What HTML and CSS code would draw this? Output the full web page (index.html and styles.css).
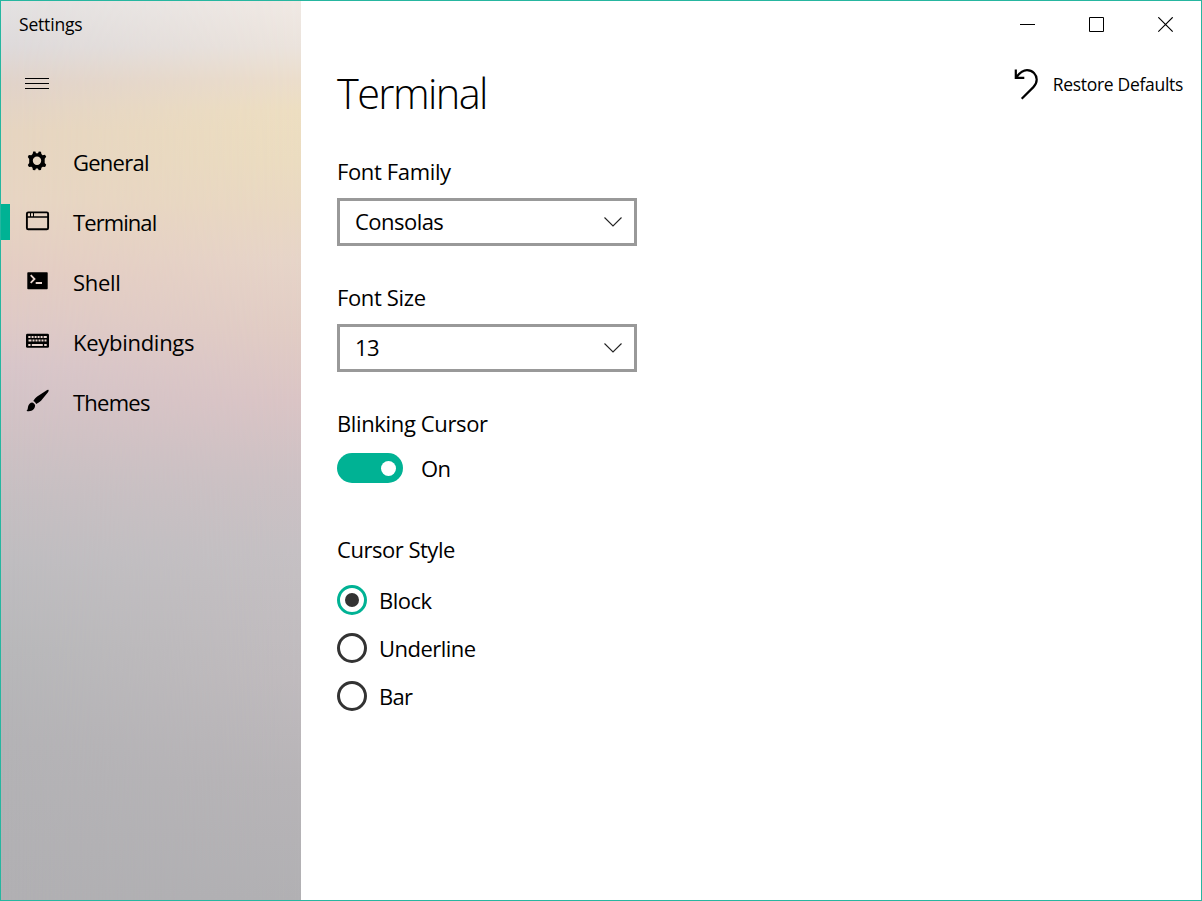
FILE: index.html
```html
<!DOCTYPE html>
<html lang="en">
<head>
<meta charset="utf-8">
<title>Settings</title>
<link rel="stylesheet" href="styles.css">
</head>
<body>
<div class="window">
  <aside class="sidebar">
    <div class="app-title">Settings</div>
    <button class="menu-button" aria-label="Menu"><i></i><i></i><i></i></button>
    <nav class="nav">
      <a class="nav-item">
        <svg class="icon" width="26" height="26" viewBox="0 0 26 26"><path fill-rule="evenodd" d="M9.2 3.4 11.4 3.6 12 5.3H14L14.8 3.5 17 3.8 17.4 6.1 18.6 7.2 21 6.8 22.2 8.8 20.7 10.8V15L22.2 16.8 21.1 18.9 18.7 18.7 17.4 19.7 17 22 14.8 22.2 13.8 20.5H12L11.1 22.2 8.9 22 8.5 19.7 7.4 18.7 5 19 3.8 17 5.2 15V10.9L3.8 9 4.8 7 7.3 7.2 8.6 6.1ZM13 8.6a4.2 4.2 0 1 0 0 8.4a4.2 4.2 0 1 0 0-8.4Z"/></svg>
        <span class="snug">General</span>
      </a>
      <a class="nav-item active">
        <svg class="icon" width="26" height="26" viewBox="0 0 26 26"><g fill="none" stroke="#000"><rect x="2.9" y="4.4" width="21.2" height="16.9" rx="1.3" stroke-width="1.9"/><path d="M3 9H24" stroke-width="1.5"/><path d="M6.5 5V9M9.5 5V9"/></g></svg>
        <span class="tight">Terminal</span>
      </a>
      <a class="nav-item">
        <svg class="icon" width="26" height="26" viewBox="0 0 26 26"><rect x="3.3" y="4.2" width="20.4" height="17" rx=".7"/><path class="cutout" d="M6.7 7.2 10.5 11 6.7 14.8M11.7 15H18" fill="none" stroke-width="1.8"/></svg>
        <span class="loose">Shell</span>
      </a>
      <a class="nav-item">
        <svg class="icon" width="26" height="26" viewBox="0 0 26 26"><rect x="2" y="5.8" width="23" height="14" rx="1.4"/><g class="cutout" fill="none" stroke-width="2"><path d="M4.3 8.9H22.8" stroke-dasharray="2.2 1.1 2 1 2 1 2 1 2 1 3.2 10"/><path d="M4.5 12.6H22.5" stroke-dasharray="3 1 2 1 2 1 2 1 2 1 2 10"/><path d="M4.3 16.9H6.5M7.8 16.9H18.8M20.2 16.9H22.7"/></g></svg>
        <span class="loose">Keybindings</span>
      </a>
      <a class="nav-item">
        <svg class="icon" width="26" height="26" viewBox="0 0 26 26"><path d="M24.5 2.1C25 2.8 24.4 3.7 23.8 4.6L17 12.7C15.6 14.1 14 15 12.2 15.9C11.6 14.5 10.6 13.5 9.3 12.9C10.4 11.3 11.5 10.1 13.2 8.6L22 2.7C23 2.1 24.2 1.5 24.5 2.1Z"/><path d="M8.3 14.4C9.8 14.8 10.9 16.1 11.1 17.6C11.1 20.3 9.5 22 7.4 22.8C5.6 23.4 3.5 23.4 2.5 22.7C4 22.3 3.6 20.4 4.1 18.6C4.6 16.2 6.2 14.4 8.3 14.4Z"/></svg>
        <span class="snug">Themes</span>
      </a>
    </nav>
  </aside>
  <main class="main">
    <div class="caption-bar">
      <svg width="16" height="16" viewBox="0 0 16 16"><path d="M0 7.5H15"/></svg>
      <svg width="16" height="16" viewBox="0 0 16 16"><path d="M.5.5H14.5V14.5H.5Z"/></svg>
      <svg width="16" height="16" viewBox="0 0 16 16"><path d="M.3.3 14.7 14.7M14.7.3.3 14.7" stroke-width="1.2"/></svg>
    </div>
    <header class="header">
      <h1>Terminal</h1>
      <button class="restore">
        <svg width="26" height="32" viewBox="0 0 26 32"><path d="M1.8 1.5V9.9H10.3M2 9.7C5.2 5.2 8.4 2.1 13 2.1C18.7 2.1 22.7 6.5 22.7 11.6C22.7 14.7 21.4 17.1 19.4 19.1L7.7 30.7"/></svg>
        <span>Restore Defaults</span>
      </button>
    </header>
    <form class="form">
      <section class="field">
        <div class="label">Font Family</div>
        <div class="select"><span>Consolas</span><svg width="18" height="10" viewBox="0 0 18 10"><path d="M.5.5 9 9 17.5.5"/></svg></div>
      </section>
      <section class="field">
        <div class="label">Font Size</div>
        <div class="select"><span class="digits">13</span><svg width="18" height="10" viewBox="0 0 18 10"><path d="M.5.5 9 9 17.5.5"/></svg></div>
      </section>
      <section class="field">
        <div class="label">Blinking Cursor</div>
        <div class="switch-row"><span class="switch"></span><span>On</span></div>
      </section>
      <section class="field">
        <div class="label cursor-style">Cursor Style</div>
        <div class="radios">
          <div class="option"><span class="radio checked"></span><span>Block</span></div>
          <div class="option"><span class="radio"></span><span>Underline</span></div>
          <div class="option"><span class="radio"></span><span class="snug">Bar</span></div>
        </div>
      </section>
    </form>
  </main>
</div>
</body>
</html>
```
FILE: styles.css
```css
* { box-sizing: border-box; }
body { margin: 0; font-family: "Open Sans", "Noto Sans", sans-serif; font-size: 22px; letter-spacing: -0.53px; color: #000; }
button { border: 0; padding: 0; background: none; font: inherit; letter-spacing: inherit; color: inherit; }
svg { display: block; flex: none; }
.window { display: flex; width: 1202px; height: 901px; border: 1px solid #26b6a0; background: #fff; }
.snug { letter-spacing: -0.75px; }
.tight { letter-spacing: -0.92px; }
.loose { letter-spacing: -0.28px; }

.sidebar {
  position: relative; isolation: isolate; width: 300px; flex: none;
  background: linear-gradient(#e4e2e2 0, #dedadb 45px, #e1d3ca 82px, #e6d5c1 130px, #e7d5c3 200px, #e4cdc3 270px, #dfcac7 320px, #d8c6ca 365px, #d0c2c5 430px, #c6bfc2 495px, #bfbdc0 560px, #b8b8ba 650px, #b4b3b6 740px, #b1b0b3 899px);
}
.sidebar::before {
  content: ""; position: absolute; inset: 0; z-index: -1;
  background: linear-gradient(#f0e9e4 0, #ebe3dc 45px, #ebddcb 80px, #eddec1 110px, #ebdcc0 160px, #e9d8c2 205px, #e6d4c8 260px, #e1ccc4 330px, #dac4c5 400px, #cdc1c4 475px, #c5c0c3 550px, #bfbabd 680px, #b7b4b7 780px, #b1b0b3 899px);
  -webkit-mask-image: linear-gradient(90deg, transparent, #000);
  mask-image: linear-gradient(90deg, transparent, #000);
}
.app-title { height: 48px; padding-left: 18px; font-size: 17.5px; line-height: 47px; letter-spacing: -0.18px; }
.menu-button { display: flex; flex-direction: column; gap: 4px; width: 24px; margin: 29px 0 0 24px; }
.menu-button i { width: 24px; height: 1px; background: #000; }
.nav { padding-top: 43px; }
.nav-item { display: flex; align-items: center; height: 60px; padding-left: 23px; line-height: 60px; }
.nav-item span { margin-left: 23px; }
.nav-item .icon { margin-top: -2px; }
.nav-item.active { gap: 14px; padding-left: 0; }
.nav-item.active span { margin-left: 9px; }
.nav-item.active::before { content: ""; width: 9px; height: 36px; background: #00b294; }
.cutout { stroke: #ead6cf; }

.main { flex: 1; }
.caption-bar { display: flex; justify-content: flex-end; gap: 53px; height: 54px; padding: 16px 27px 0 0; }
.caption-bar path { fill: none; stroke: #000; }
.header { display: flex; justify-content: space-between; padding: 0 18px 0 36px; height: 99px; }
h1 { margin: 6px 0 0; font-size: 41.5px; line-height: 64px; font-weight: 330; letter-spacing: -1.6px; }
.restore { display: flex; align-items: center; gap: 13px; height: 57px; font-size: 17.5px; letter-spacing: -0.3px; }
.restore path { fill: none; stroke: #000; stroke-width: 2.2; }
.form { padding-left: 36px; }
.field { height: 126px; }
.label { height: 44px; line-height: 34px; letter-spacing: -0.36px; }
.cursor-style { letter-spacing: -0.48px; }
.select { display: flex; align-items: center; justify-content: space-between; width: 300px; height: 48px; padding: 0 12px 0 15px; border: 3px solid #999; line-height: 40px; }
.select span { height: 42px; }
.select path { fill: none; stroke: #222; stroke-width: 1.1; }
.switch-row { display: flex; align-items: center; gap: 18px; height: 30px; margin-top: 3px; }
.switch { display: flex; align-items: center; justify-content: flex-end; width: 66px; height: 30px; padding-right: 7px; border-radius: 15px; background: #00b294; }
.switch::after { content: ""; width: 15px; height: 15px; border-radius: 50%; background: #fff; }
.option { display: flex; align-items: center; gap: 12px; height: 48px; }
.radio { display: grid; place-items: center; width: 30px; height: 30px; border: 3px solid #333; border-radius: 50%; }
.radio.checked { border-color: #00b294; }
.radio.checked::after { content: ""; width: 14px; height: 14px; border-radius: 50%; background: #333; }
```
